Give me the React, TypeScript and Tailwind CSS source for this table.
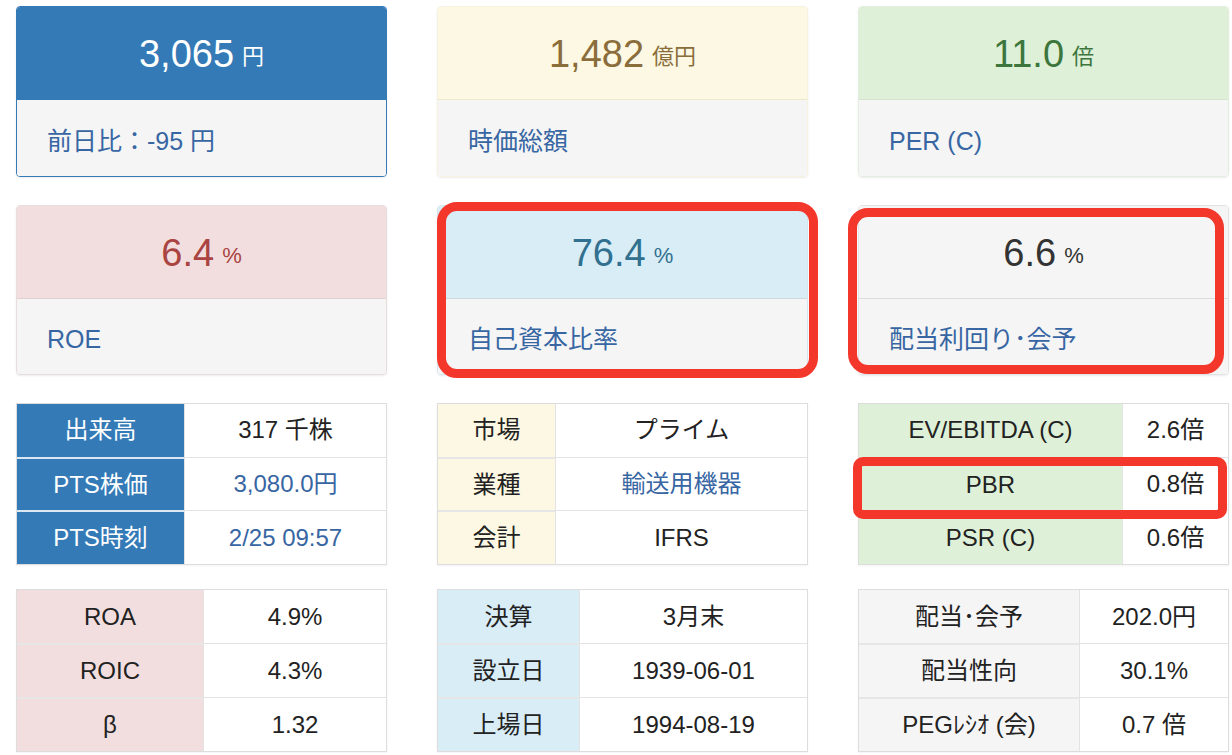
const font = "font-['Liberation_Sans','Noto_Sans_CJK_JP',sans-serif]";

type CardProps = {
  value: string;
  unit: string;
  label: string;
  headBg: string;
  headText: string;
  border: string;
  divider: string;
};

function StatCard({ value, unit, label, headBg, headText, border, divider }: CardProps) {
  return (
    <div className={`flex h-full flex-col overflow-hidden rounded-[4px] border shadow-[0_1px_2px_rgba(0,0,0,0.08)] ${border}`}>
      <div className={`flex h-[93px] shrink-0 items-center justify-center border-b pt-[2px] ${headBg} ${headText} ${divider}`}>
        <span className="text-[38px] leading-none">{value}</span>
        <span className="ml-[8px] mt-[6px] text-[22px] leading-none">{unit}</span>
      </div>
      <div className="flex flex-1 items-center bg-[#f5f5f5] px-[30px] pt-[7px] text-[25px] text-[#3766a3]">
        {label}
      </div>
    </div>
  );
}

type Row = { k: string; v: string; link?: boolean };

function InfoTable({
  rows,
  labelW,
  labelBg,
  labelText = "text-[#222]",
  labelDivider = "border-[#e6e6e6]",
}: {
  rows: Row[];
  labelW: string;
  labelBg: string;
  labelText?: string;
  labelDivider?: string;
}) {
  return (
    <div className="flex h-full flex-col border border-[#ddd] shadow-[0_1px_2px_rgba(0,0,0,0.05)]">
      {rows.map((r, i) => (
        <div key={r.k} className={`flex flex-1 ${i > 0 ? "border-t border-[#e3e3e3]" : ""}`}>
          <div
            className={`flex shrink-0 items-center justify-center text-[24px] ${labelW} ${labelBg} ${labelText} ${
              i > 0 ? `border-t-2 -mt-px ${labelDivider}` : ""
            }`}
          >
            {r.k}
          </div>
          <div
            className={`flex flex-1 items-center justify-center border-l border-[#e3e3e3] bg-white text-[24px] ${
              r.link ? "text-[#3766a3]" : "text-[#222]"
            }`}
          >
            {r.v}
          </div>
        </div>
      ))}
    </div>
  );
}

export default function App() {
  return (
    <div className={`relative h-[755px] w-[1232px] overflow-hidden bg-white pl-[16px] pt-[6px] ${font}`}>
      {/* Top cards */}
      <div className="grid h-[171px] grid-cols-[371px_371px_371px] gap-x-[50px]">
        <StatCard
          value="3,065"
          unit="円"
          label="前日比：-95 円"
          headBg="bg-[#337ab7]"
          headText="text-white"
          border="border-[#337ab7]"
          divider="border-[#337ab7]"
        />
        <StatCard
          value="1,482"
          unit="億円"
          label="時価総額"
          headBg="bg-[#fcf8e3]"
          headText="text-[#8a6d3b]"
          border="border-[#f7f1e0]"
          divider="border-[#f0e6cc]"
        />
        <StatCard
          value="11.0"
          unit="倍"
          label="PER (C)"
          headBg="bg-[#dff0d8]"
          headText="text-[#3c763d]"
          border="border-[#e4eee0]"
          divider="border-[#d6e4cf]"
        />
      </div>

      <div className="mt-[28px] grid h-[170px] grid-cols-[371px_371px_371px] gap-x-[50px]">
        <StatCard
          value="6.4"
          unit="%"
          label="ROE"
          headBg="bg-[#f2dede]"
          headText="text-[#a94442]"
          border="border-[#e8dcdc]"
          divider="border-[#e3d0d2]"
        />
        <StatCard
          value="76.4"
          unit="%"
          label="自己資本比率"
          headBg="bg-[#d9edf7]"
          headText="text-[#31708f]"
          border="border-[#d6e6ee]"
          divider="border-[#cfd8dc]"
        />
        <StatCard
          value="6.6"
          unit="%"
          label="配当利回り･会予"
          headBg="bg-[#f5f5f5]"
          headText="text-[#333]"
          border="border-[#e3e3e3]"
          divider="border-[#dcdcdc]"
        />
      </div>

      {/* Tables */}
      <div className="mt-[28px] grid h-[162px] grid-cols-[371px_371px_371px] gap-x-[50px]">
        <InfoTable
          labelW="w-[167px]"
          labelBg="bg-[#337ab7]"
          labelText="text-white"
          labelDivider="border-[#dbe7f3]"
          rows={[
            { k: "出来高", v: "317 千株" },
            { k: "PTS株価", v: "3,080.0円", link: true },
            { k: "PTS時刻", v: "2/25 09:57", link: true },
          ]}
        />
        <InfoTable
          labelW="w-[117px]"
          labelBg="bg-[#fcf8e3]"
          rows={[
            { k: "市場", v: "プライム" },
            { k: "業種", v: "輸送用機器", link: true },
            { k: "会計", v: "IFRS" },
          ]}
        />
        <InfoTable
          labelW="w-[263px]"
          labelBg="bg-[#dff0d8]"
          rows={[
            { k: "EV/EBITDA (C)", v: "2.6倍" },
            { k: "PBR", v: "0.8倍" },
            { k: "PSR (C)", v: "0.6倍" },
          ]}
        />
      </div>

      <div className="mt-[24px] grid h-[163px] grid-cols-[371px_371px_371px] gap-x-[50px]">
        <InfoTable
          labelW="w-[186px]"
          labelBg="bg-[#f2dede]"
          rows={[
            { k: "ROA", v: "4.9%" },
            { k: "ROIC", v: "4.3%" },
            { k: "β", v: "1.32" },
          ]}
        />
        <InfoTable
          labelW="w-[141px]"
          labelBg="bg-[#d9edf7]"
          rows={[
            { k: "決算", v: "3月末" },
            { k: "設立日", v: "1939-06-01" },
            { k: "上場日", v: "1994-08-19" },
          ]}
        />
        <InfoTable
          labelW="w-[220px]"
          labelBg="bg-[#f5f5f5]"
          rows={[
            { k: "配当･会予", v: "202.0円" },
            { k: "配当性向", v: "30.1%" },
            { k: "PEGﾚｼｵ (会)", v: "0.7 倍" },
          ]}
        />
      </div>

      {/* Red highlight annotations */}
      <div className="pointer-events-none absolute left-[437px] top-[202px] h-[176px] w-[381px] rounded-[20px] border-[9px] border-[#f4372b]" />
      <div className="pointer-events-none absolute left-[848px] top-[208px] h-[166px] w-[376px] rounded-[20px] border-[9px] border-[#f4372b]" />
      <div className="pointer-events-none absolute left-[853px] top-[457px] h-[62px] w-[374px] rounded-[10px] border-[9px] border-[#f4372b]" />
    </div>
  );
}
